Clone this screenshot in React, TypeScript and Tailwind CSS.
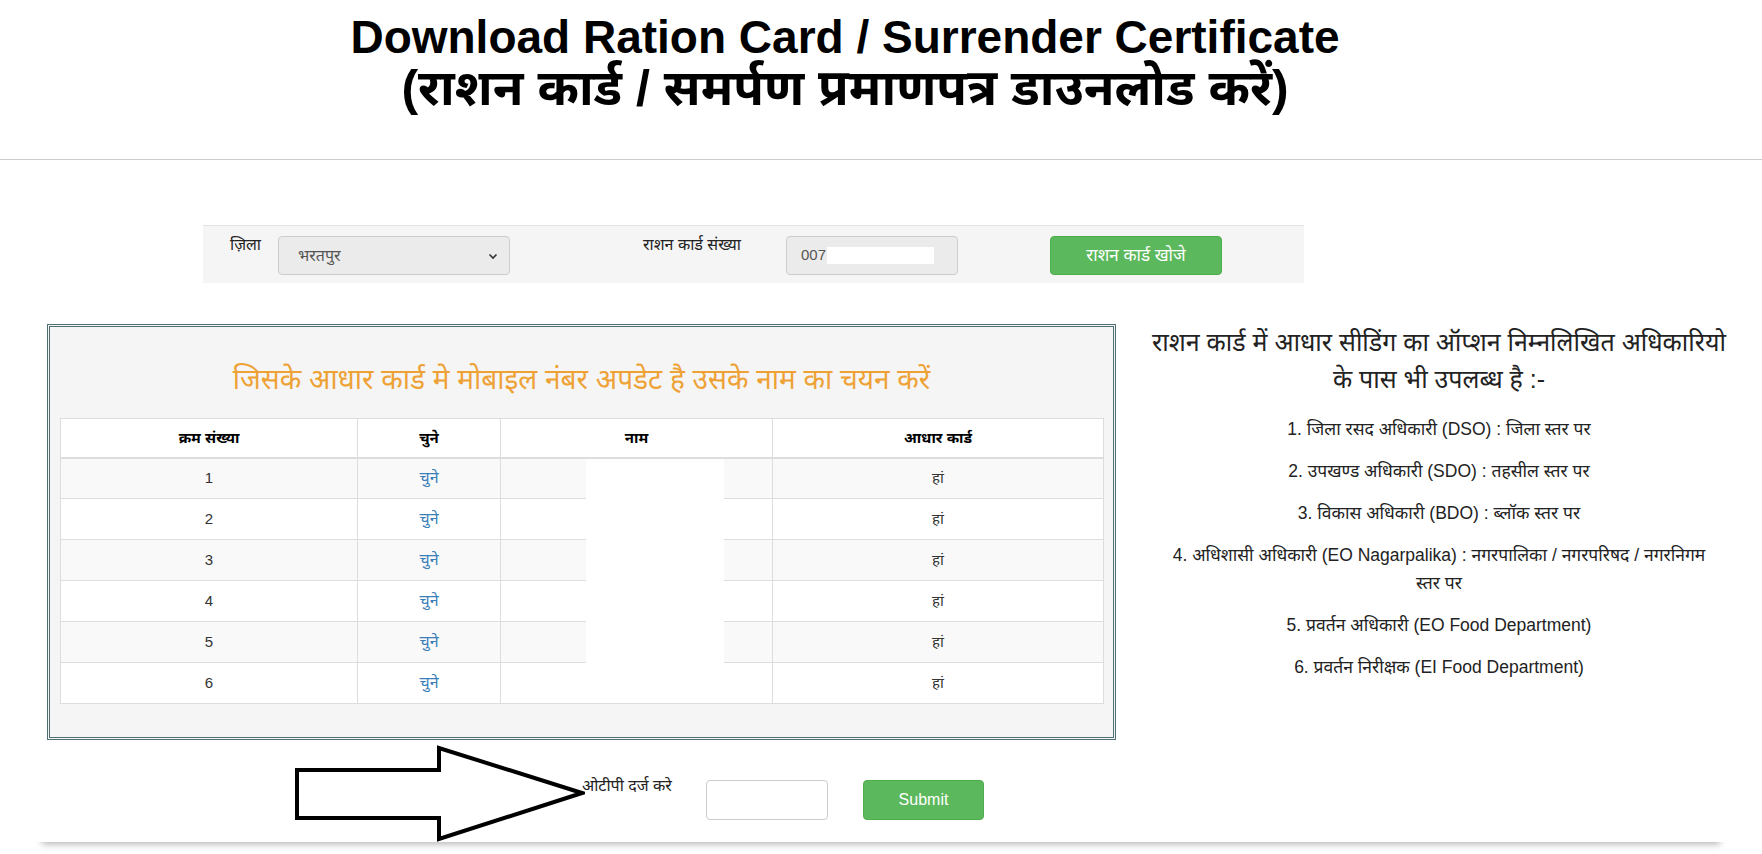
import React from 'react';

const rows = [1, 2, 3, 4, 5, 6];

const officers = [
  '1. जिला रसद अधिकारी (DSO) : जिला स्तर पर',
  '2. उपखण्ड अधिकारी (SDO) : तहसील स्तर पर',
  '3. विकास अधिकारी (BDO) : ब्लॉक स्तर पर',
  '4. अधिशासी अधिकारी (EO Nagarpalika) : नगरपालिका / नगरपरिषद / नगरनिगम|स्तर पर',
  '5. प्रवर्तन अधिकारी (EO Food Department)',
  '6. प्रवर्तन निरीक्षक (EI Food Department)',
];

/**
 * Ration card download page
 */
const App: React.FC = () => {
  return (
    <div className="w-[1762px] min-h-[854px] bg-white text-black font-['Liberation_Sans','Noto_Sans','Noto_Sans_Devanagari',sans-serif]">
      {/* Header */}
      <header className="h-[160px] border-b border-[#cccccc]">
        <div className="w-[1690px] pt-[12px] text-center">
          <h1 className="text-[46px] font-bold leading-[51px]">Download Ration Card / Surrender Certificate</h1>
          <h1 className="text-[50px] font-bold leading-[51px]">(राशन कार्ड / समर्पण प्रमाणपत्र डाउनलोड करें)</h1>
        </div>
      </header>

      <div className="ml-[35px] w-[1692px] pt-[65px] shadow-[0_9px_7px_-7px_rgba(0,0,0,0.3)]">
        {/* Search bar */}
        <div className="ml-[168px] flex h-[58px] w-[1101px] items-start border-t border-[#e3e3e3] bg-[#f5f5f5] pl-[27px] text-[16px] text-[#222]">
          <span className="mt-[8px] w-[48px] flex-none leading-[22px]">ज़िला</span>
          <div className="mt-[10px] flex h-[39px] w-[232px] flex-none items-center justify-between rounded-[4px] border border-[#cccccc] bg-[#ebebeb] pl-[19px] pr-[10px] text-[#555]">
            <span>भरतपुर</span>
            <svg width="12" height="12" viewBox="0 0 12 12" fill="none" stroke="#333" strokeWidth="1.6">
              <path d="M2.5 4.5 6 8l3.5-3.5" />
            </svg>
          </div>
          <span className="ml-[133px] mt-[8px] w-[102px] flex-none leading-[22px]">राशन कार्ड संख्या</span>
          <div className="ml-[41px] mt-[10px] flex h-[39px] w-[172px] flex-none items-center rounded-[4px] border border-[#cccccc] bg-[#ebebeb] pl-[14px] text-[15px] text-[#555]">
            <span>007</span>
            <span className="ml-[1px] inline-block h-[17px] w-[107px] bg-white" />
          </div>
          <button className="ml-[92px] mt-[10px] h-[39px] w-[172px] flex-none rounded-[4px] border border-[#4cae4c] bg-[#5cb85c] text-[17px] text-white">
            राशन कार्ड खोजे
          </button>
        </div>

        {/* Main row */}
        <div className="mt-[41px] flex items-start">
          {/* Member table */}
          <div className="ml-[12px] h-[416px] w-[1069px] flex-none border-[3px] border-double border-[#4f6f74] bg-[#f5f5f5]">
            <h2 className="h-[91px] pt-[35px] text-center text-[28px] leading-[36px] text-[#eea236]">
              जिसके आधार कार्ड मे मोबाइल नंबर अपडेट है उसके नाम का चयन करें
            </h2>
            <div className="relative ml-[10px] w-[1043px]">
              <table className="w-full table-fixed border-collapse text-[15px] text-[#333]">
                <colgroup>
                  <col className="w-[297px]" />
                  <col className="w-[143px]" />
                  <col className="w-[272px]" />
                  <col className="w-[331px]" />
                </colgroup>
                <thead>
                  <tr className="h-[39px] bg-white font-bold text-black">
                    <th className="border border-b-2 border-[#dddddd] text-center">क्रम संख्या</th>
                    <th className="border border-b-2 border-[#dddddd] text-center">चुने</th>
                    <th className="border border-b-2 border-[#dddddd] text-center">नाम</th>
                    <th className="border border-b-2 border-[#dddddd] text-center">आधार कार्ड</th>
                  </tr>
                </thead>
                <tbody>
                  {rows.map((n) => (
                    <tr key={n} className={`h-[41px] ${n % 2 === 1 ? 'bg-[#f9f9f9]' : 'bg-white'}`}>
                      <td className="border border-[#dddddd] text-center">{n}</td>
                      <td className="border border-[#dddddd] text-center text-[16px] text-[#3a7fb8]">चुने</td>
                      <td className="border border-[#dddddd]" />
                      <td className="border border-[#dddddd] text-center">हां</td>
                    </tr>
                  ))}
                </tbody>
              </table>
              {/* Redacted names */}
              <div className="absolute left-[526px] top-[41px] h-[205px] w-[138px] bg-white" />
            </div>
          </div>

          {/* Info column */}
          <div className="ml-[33px] w-[580px] flex-none text-center">
            <p className="text-[25px] leading-[37px] text-[#222]">
              राशन कार्ड में आधार सीडिंग का ऑप्शन निम्नलिखित अधिकारियो
              <br />
              के पास भी उपलब्ध है :-
            </p>
            <ul className="mt-[17px] flex flex-col gap-[14px] text-[17.5px] leading-[28px] text-[#222]">
              {officers.map((item) => {
                const [first, second] = item.split('|');
                return (
                  <li key={item}>
                    {first}
                    {second && (
                      <>
                        <br />
                        {second}
                      </>
                    )}
                  </li>
                );
              })}
            </ul>
          </div>
        </div>

        {/* OTP row */}
        <div className="mt-[5px] flex h-[97px] items-start">
          <svg className="ml-[260px] flex-none" width="290" height="97" viewBox="0 0 290 97" fill="white" stroke="black" strokeWidth="4" strokeLinejoin="miter">
            <path d="M2 25 H144 V3 L287 48 L144 94 V73 H2 Z" />
          </svg>
          <span className="-ml-[3px] mt-[31px] w-[124px] flex-none text-[16px] leading-[20px] text-[#222]">ओटीपी दर्ज करे</span>
          <input className="mt-[35px] h-[40px] w-[122px] flex-none rounded-[4px] border border-[#cccccc] bg-white" />
          <button className="ml-[35px] mt-[35px] h-[40px] w-[121px] flex-none rounded-[4px] border border-[#4cae4c] bg-[#5cb85c] text-[16px] text-white">
            Submit
          </button>
        </div>
      </div>
    </div>
  );
};

export default App;
